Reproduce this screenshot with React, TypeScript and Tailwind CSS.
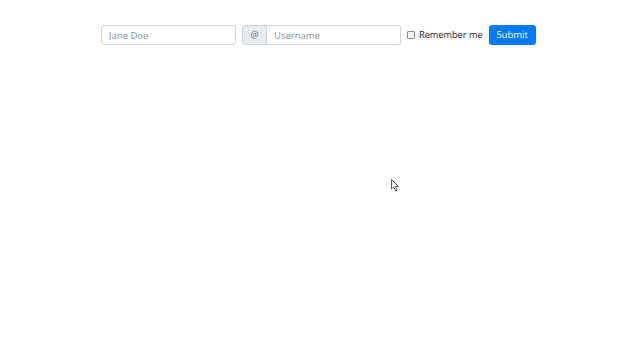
export default function App() {
  return (
    <div className="relative h-[360px] w-[640px] bg-white" style={{ fontFamily: '"Open Sans", "Liberation Sans", sans-serif' }}>
      <form className="flex items-center pl-[101px] pt-[25px]" onSubmit={e => e.preventDefault()}>
        <input
          type="text"
          placeholder="Jane Doe"
          className="h-[20px] w-[135px] rounded-[3px] border border-[#ced4da] px-[7px] text-[9.5px] text-[#495057] placeholder:text-[#8a9096] outline-none"
        />
        <div className="ml-[6px] flex h-[20px]">
          <span className="flex w-[25px] items-center justify-center rounded-l-[3px] border border-[#ced4da] bg-[#e9ecef] text-[9px] text-[#6c757d]">
            @
          </span>
          <input
            type="text"
            placeholder="Username"
            className="h-[20px] w-[134px] rounded-r-[3px] border border-l-0 border-[#ced4da] px-[7px] text-[9.5px] text-[#495057] placeholder:text-[#8a9096] outline-none"
          />
        </div>
        <label className="ml-[6px] flex items-center text-[9.2px] text-[#212529]">
          <span className="mr-[4px] h-[8px] w-[8px] rounded-[1px] border border-[#8d8d8d] bg-[#f3f3f3]" />
          Remember me
        </label>
        <button
          type="submit"
          className="ml-[6px] h-[20px] w-[47px] rounded-[3px] bg-[#007bff] text-[9.5px] text-white"
        >
          Submit
        </button>
      </form>
      <svg className="absolute left-[391px] top-[179px]" width="9" height="13" viewBox="0 0 9 13">
        <path d="M0.5 0.5 L0.5 10 L2.8 8 L4.5 12 L6 11.3 L4.4 7.5 L7.5 7.5 Z" fill="white" stroke="#333" strokeWidth="0.8" />
      </svg>
    </div>
  );
}
